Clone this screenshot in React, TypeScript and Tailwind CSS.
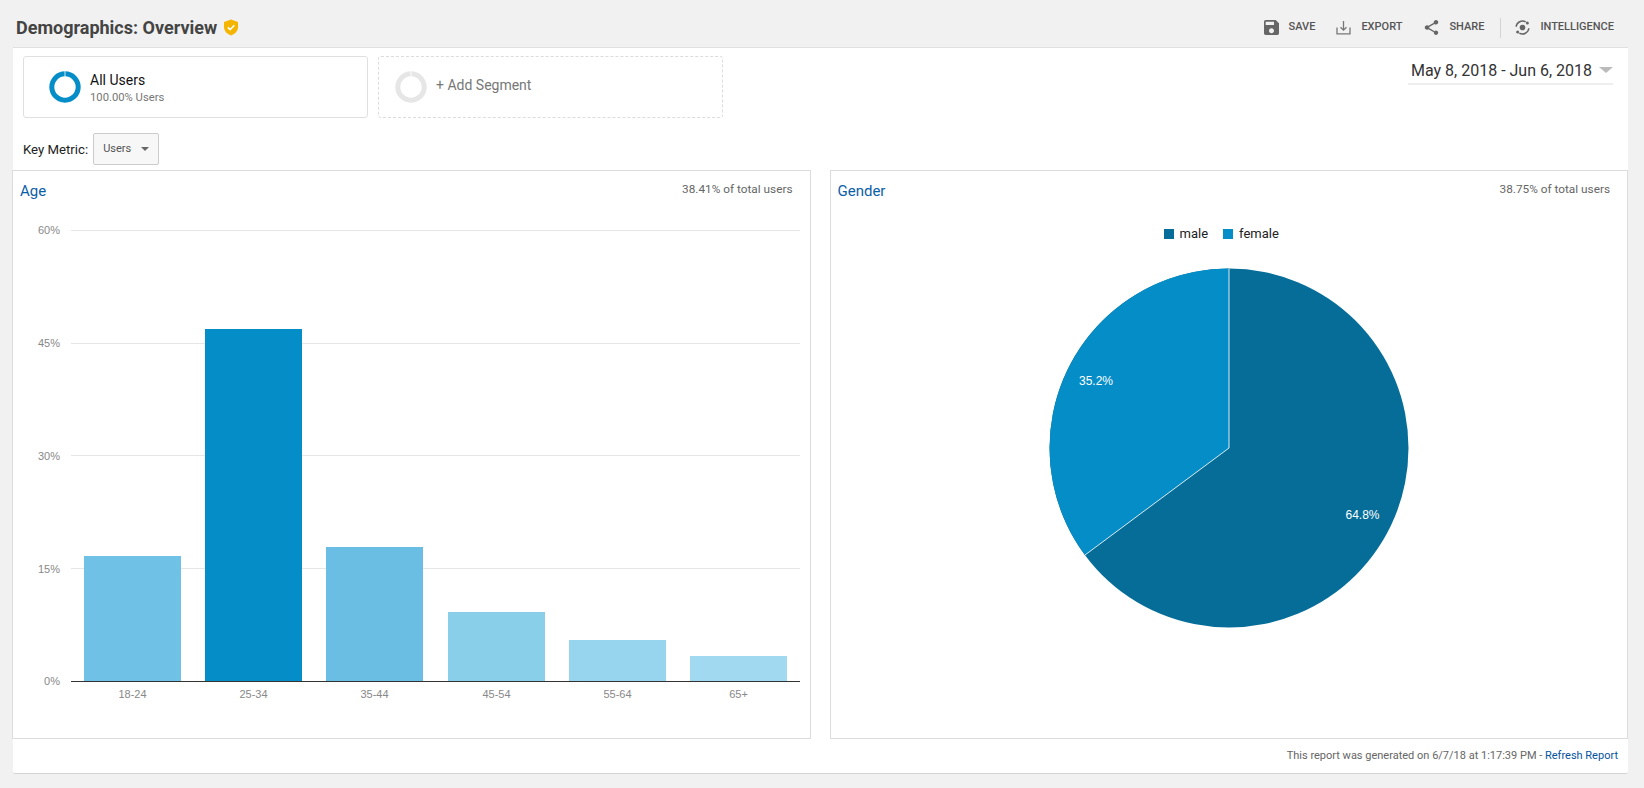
import React from "react";

const ages = [
  { label: "18-24", x: 84, top: 556, fill: "#6fc1e6" },
  { label: "25-34", x: 205, top: 329, fill: "#058dc7" },
  { label: "35-44", x: 326, top: 547, fill: "#6abde3" },
  { label: "45-54", x: 448, top: 612, fill: "#89cfea" },
  { label: "55-64", x: 569, top: 640, fill: "#97d5ef" },
  { label: "65+", x: 690, top: 656, fill: "#a0d9f0" },
];

const ticks = [
  { label: "60%", y: 230, textY: 234 },
  { label: "45%", y: 343, textY: 347 },
  { label: "30%", y: 455, textY: 460 },
  { label: "15%", y: 568, textY: 573 },
];

function Toolbar({ icon, label }: { icon: React.ReactNode; label: string }) {
  return (
    <button className="flex items-center gap-[10px] text-[11px] font-medium uppercase text-[#555]">
      {icon}
      {label}
    </button>
  );
}

function Ring({ color }: { color: string }) {
  return (
    <svg width="32" height="32" viewBox="0 0 32 32" className="shrink-0">
      <circle cx="16" cy="16" r="13.2" fill="none" stroke={color} strokeWidth="5" />
      <rect x="15.6" y="0" width="0.8" height="6" fill="#fff" />
    </svg>
  );
}

function AgeChart() {
  // y offsets below are page y minus the panel top (171)
  return (
    <svg width="797" height="567" viewBox="0 0 797 567" className="absolute left-0 top-0">
      {ticks.map((t) => (
        <g key={t.label}>
          <line x1="58" x2="787" y1={t.y - 170.5} y2={t.y - 170.5} stroke="#e6e6e6" />
          <text
            x="47"
            y={t.textY - 171}
            textAnchor="end"
            fontSize="11"
            fill="#888"
            fontFamily="'Liberation Sans', sans-serif"
          >
            {t.label}
          </text>
        </g>
      ))}
      {ages.map((a) => (
        <g key={a.label}>
          <rect x={a.x - 13} y={a.top - 171} width="97" height={681 - a.top} fill={a.fill} />
          <text
            x={a.x + 35.5}
            y="527"
            textAnchor="middle"
            fontSize="11"
            fill="#888"
            fontFamily="'Liberation Sans', sans-serif"
          >
            {a.label}
          </text>
        </g>
      ))}
      <line x1="58" x2="787" y1="510.5" y2="510.5" stroke="#333" />
      <text
        x="47"
        y="514"
        textAnchor="end"
        fontSize="11"
        fill="#888"
        fontFamily="'Liberation Sans', sans-serif"
      >
        0%
      </text>
    </svg>
  );
}

function GenderPie() {
  return (
    <svg width="360" height="360" viewBox="0 0 360 360" className="absolute left-[218px] top-[97px]">
      <circle cx="180" cy="180" r="179.5" fill="#056d98" />
      <path d="M180 180 L180 0.5 A179.5 179.5 0 0 0 36 287 Z" fill="#058dc7" />
      <path d="M180 0.5 L180 180 L36 287" fill="none" stroke="#fff" strokeWidth="1" strokeOpacity="0.85" />
      <text x="47" y="117" textAnchor="middle" fontSize="12" fill="#fff" fontFamily="'Liberation Sans', sans-serif">
        35.2%
      </text>
      <text x="313.5" y="251" textAnchor="middle" fontSize="12" fill="#fff" fontFamily="'Liberation Sans', sans-serif">
        64.8%
      </text>
    </svg>
  );
}

export default function App() {
  return (
    <div className="min-h-screen bg-[#f1f1f1] font-['Roboto',sans-serif] text-[#333]">
      <header className="flex h-[47px] items-center justify-between pl-4 pr-[30px] pt-2">
        <div className="flex items-center gap-[7px]">
          <h1 className="text-[18px] font-bold text-[#444]">Demographics: Overview</h1>
          <svg width="14" height="17" viewBox="0 0 14 17">
            <path d="M7 0.5 L14 3 V8 C14 12 11 15 7 16.5 C3 15 0 12 0 8 V3 Z" fill="#f4b400" />
            <path d="M3.8 8.3 L6.2 10.6 L10.4 6.2" fill="none" stroke="#fff" strokeWidth="1.6" />
          </svg>
        </div>
        <div className="flex items-center">
          <Toolbar
            label="Save"
            icon={
              <svg width="15" height="15" viewBox="3 3 18 18" fill="#666">
                <path d="M17 3H5c-1.11 0-2 .9-2 2v14c0 1.1.89 2 2 2h14c1.1 0 2-.9 2-2V7l-4-4zm-5 16c-1.66 0-3-1.34-3-3s1.34-3 3-3 3 1.34 3 3-1.34 3-3 3zm3-10H5V5h10v4z" />
              </svg>
            }
          />
          <div className="w-[21px]" />
          <Toolbar
            label="Export"
            icon={
              <svg width="15" height="15" viewBox="0 0 15 15" fill="none" stroke="#777" strokeWidth="1.3">
                <path d="M1 7.5 V13.8 H14 V7.5" />
                <path d="M7.5 1 V10 M4.5 7.2 L7.5 10.2 L10.5 7.2" />
              </svg>
            }
          />
          <div className="w-[22px]" />
          <Toolbar
            label="Share"
            icon={
              <svg width="15" height="15" viewBox="3 2 18 20" fill="#666">
                <path d="M18 16.08c-.76 0-1.44.3-1.96.77L8.91 12.7c.05-.23.09-.46.09-.7s-.04-.47-.09-.7l7.05-4.11c.54.5 1.25.81 2.04.81 1.66 0 3-1.34 3-3s-1.34-3-3-3-3 1.34-3 3c0 .24.04.47.09.7L8.04 9.81C7.5 9.31 6.79 9 6 9c-1.66 0-3 1.34-3 3s1.34 3 3 3c.79 0 1.5-.31 2.04-.81l7.12 4.16c-.05.21-.08.43-.08.65 0 1.61 1.31 2.92 2.92 2.92s2.92-1.31 2.92-2.92-1.31-2.92-2.92-2.92z" />
              </svg>
            }
          />
          <div className="ml-4 mr-[14px] h-5 w-px bg-[#d4d4d4]" />
          <Toolbar
            label="Intelligence"
            icon={
              <svg width="15" height="15" viewBox="0 0 16 16" fill="none" stroke="#666" strokeWidth="1.6">
                <circle cx="8" cy="8" r="3" fill="#666" stroke="none" />
                <path d="M1.2 7.2 A6.9 6.9 0 0 1 11.4 2" />
                <path d="M14.8 8.8 A6.9 6.9 0 0 1 4.6 14" />
                <circle cx="13.2" cy="3.2" r="1.6" fill="#666" stroke="none" />
                <circle cx="2.8" cy="12.8" r="1.6" fill="#666" stroke="none" />
              </svg>
            }
          />
        </div>
      </header>

      <main className="ml-[13px] flex h-[727px] w-[1615px] flex-col rounded-b-[2px] border-b border-t border-[#e0e0e0] border-b-[#d4d4d4] bg-white">
        <div className="flex h-[85px] items-start justify-between pl-[10px] pr-[15px] pt-2">
          <div className="flex gap-[10px]">
            <div className="flex h-[62px] w-[345px] items-center gap-[9px] rounded-[3px] border border-[#e0e0e0] pl-[25px]">
              <Ring color="#058dc7" />
              <div className="mt-[2px]">
                <div className="text-[14px] leading-[18px] text-[#111]">All Users</div>
                <div className="mt-[2px] text-[11.25px] leading-[14px] text-[#777]">100.00% Users</div>
              </div>
            </div>
            <div className="flex h-[62px] w-[345px] items-center gap-[9px] rounded-[3px] border border-dashed border-[#dcdcdc] pl-4">
              <Ring color="#e6e6e6" />
              <div className="-mt-[3px] text-[14px] text-[#777]">+ Add Segment</div>
            </div>
          </div>
          <button className="mt-1 flex h-[25px] w-[205px] items-start justify-between border-b-2 border-[#eeeeee] pl-[3px] pt-px text-[16px] leading-[20px] text-[#333]">
            May 8, 2018 - Jun 6, 2018
            <span className="mt-[6px] h-0 w-0 border-x-[7px] border-t-[6px] border-x-transparent border-t-[#bbb]" />
          </button>
        </div>
        <div className="flex h-[37px] items-start pl-[10px]">
          <span className="mt-[9px] text-[13.2px] leading-[16px] text-[#222]">Key Metric:</span>
          <button className="ml-[5px] flex h-8 w-[66px] items-center gap-[10px] rounded-[2px] border border-[#ccc] bg-[#f7f7f7] pl-[9px] text-[11px] text-[#555]">
            Users
            <span className="h-0 w-0 border-x-[4px] border-t-[4px] border-x-transparent border-t-[#666]" />
          </button>
        </div>
        <div className="-ml-px flex h-[569px] gap-[19px]">
          <section className="relative h-full w-[799px] border border-[#dcdcdc]">
            <AgeChart />
            <h2 className="absolute left-[7px] top-[9px] text-[15px] text-[#0b5ea8]">Age</h2>
            <span className="absolute right-[17px] top-[10px] text-[11.8px] text-[#666]">38.41% of total users</span>
          </section>
          <section className="relative h-full w-[799px] border border-[#dcdcdc]">
            <h2 className="absolute left-[7px] top-[9px] text-[15px] text-[#0b5ea8]">Gender</h2>
            <span className="absolute right-[17px] top-[10px] text-[11.8px] text-[#666]">38.75% of total users</span>
            <div className="mt-[55px] flex justify-center gap-[15px] pr-[15px] text-[13px] leading-4 text-[#222]">
              <span className="flex items-center gap-[6px]">
                <i className="h-[10px] w-[10px] bg-[#056d98]" />
                male
              </span>
              <span className="flex items-center gap-[6px]">
                <i className="h-[10px] w-[10px] bg-[#058dc7]" />
                female
              </span>
            </div>
            <GenderPie />
          </section>
        </div>
        <div className="flex flex-1 items-center justify-end pr-[10px] text-[11px] text-[#666]">
          This report was generated on 6/7/18 at 1:17:39 PM -&nbsp;
          <a className="text-[#05539e]">Refresh Report</a>
        </div>
      </main>
    </div>
  );
}
